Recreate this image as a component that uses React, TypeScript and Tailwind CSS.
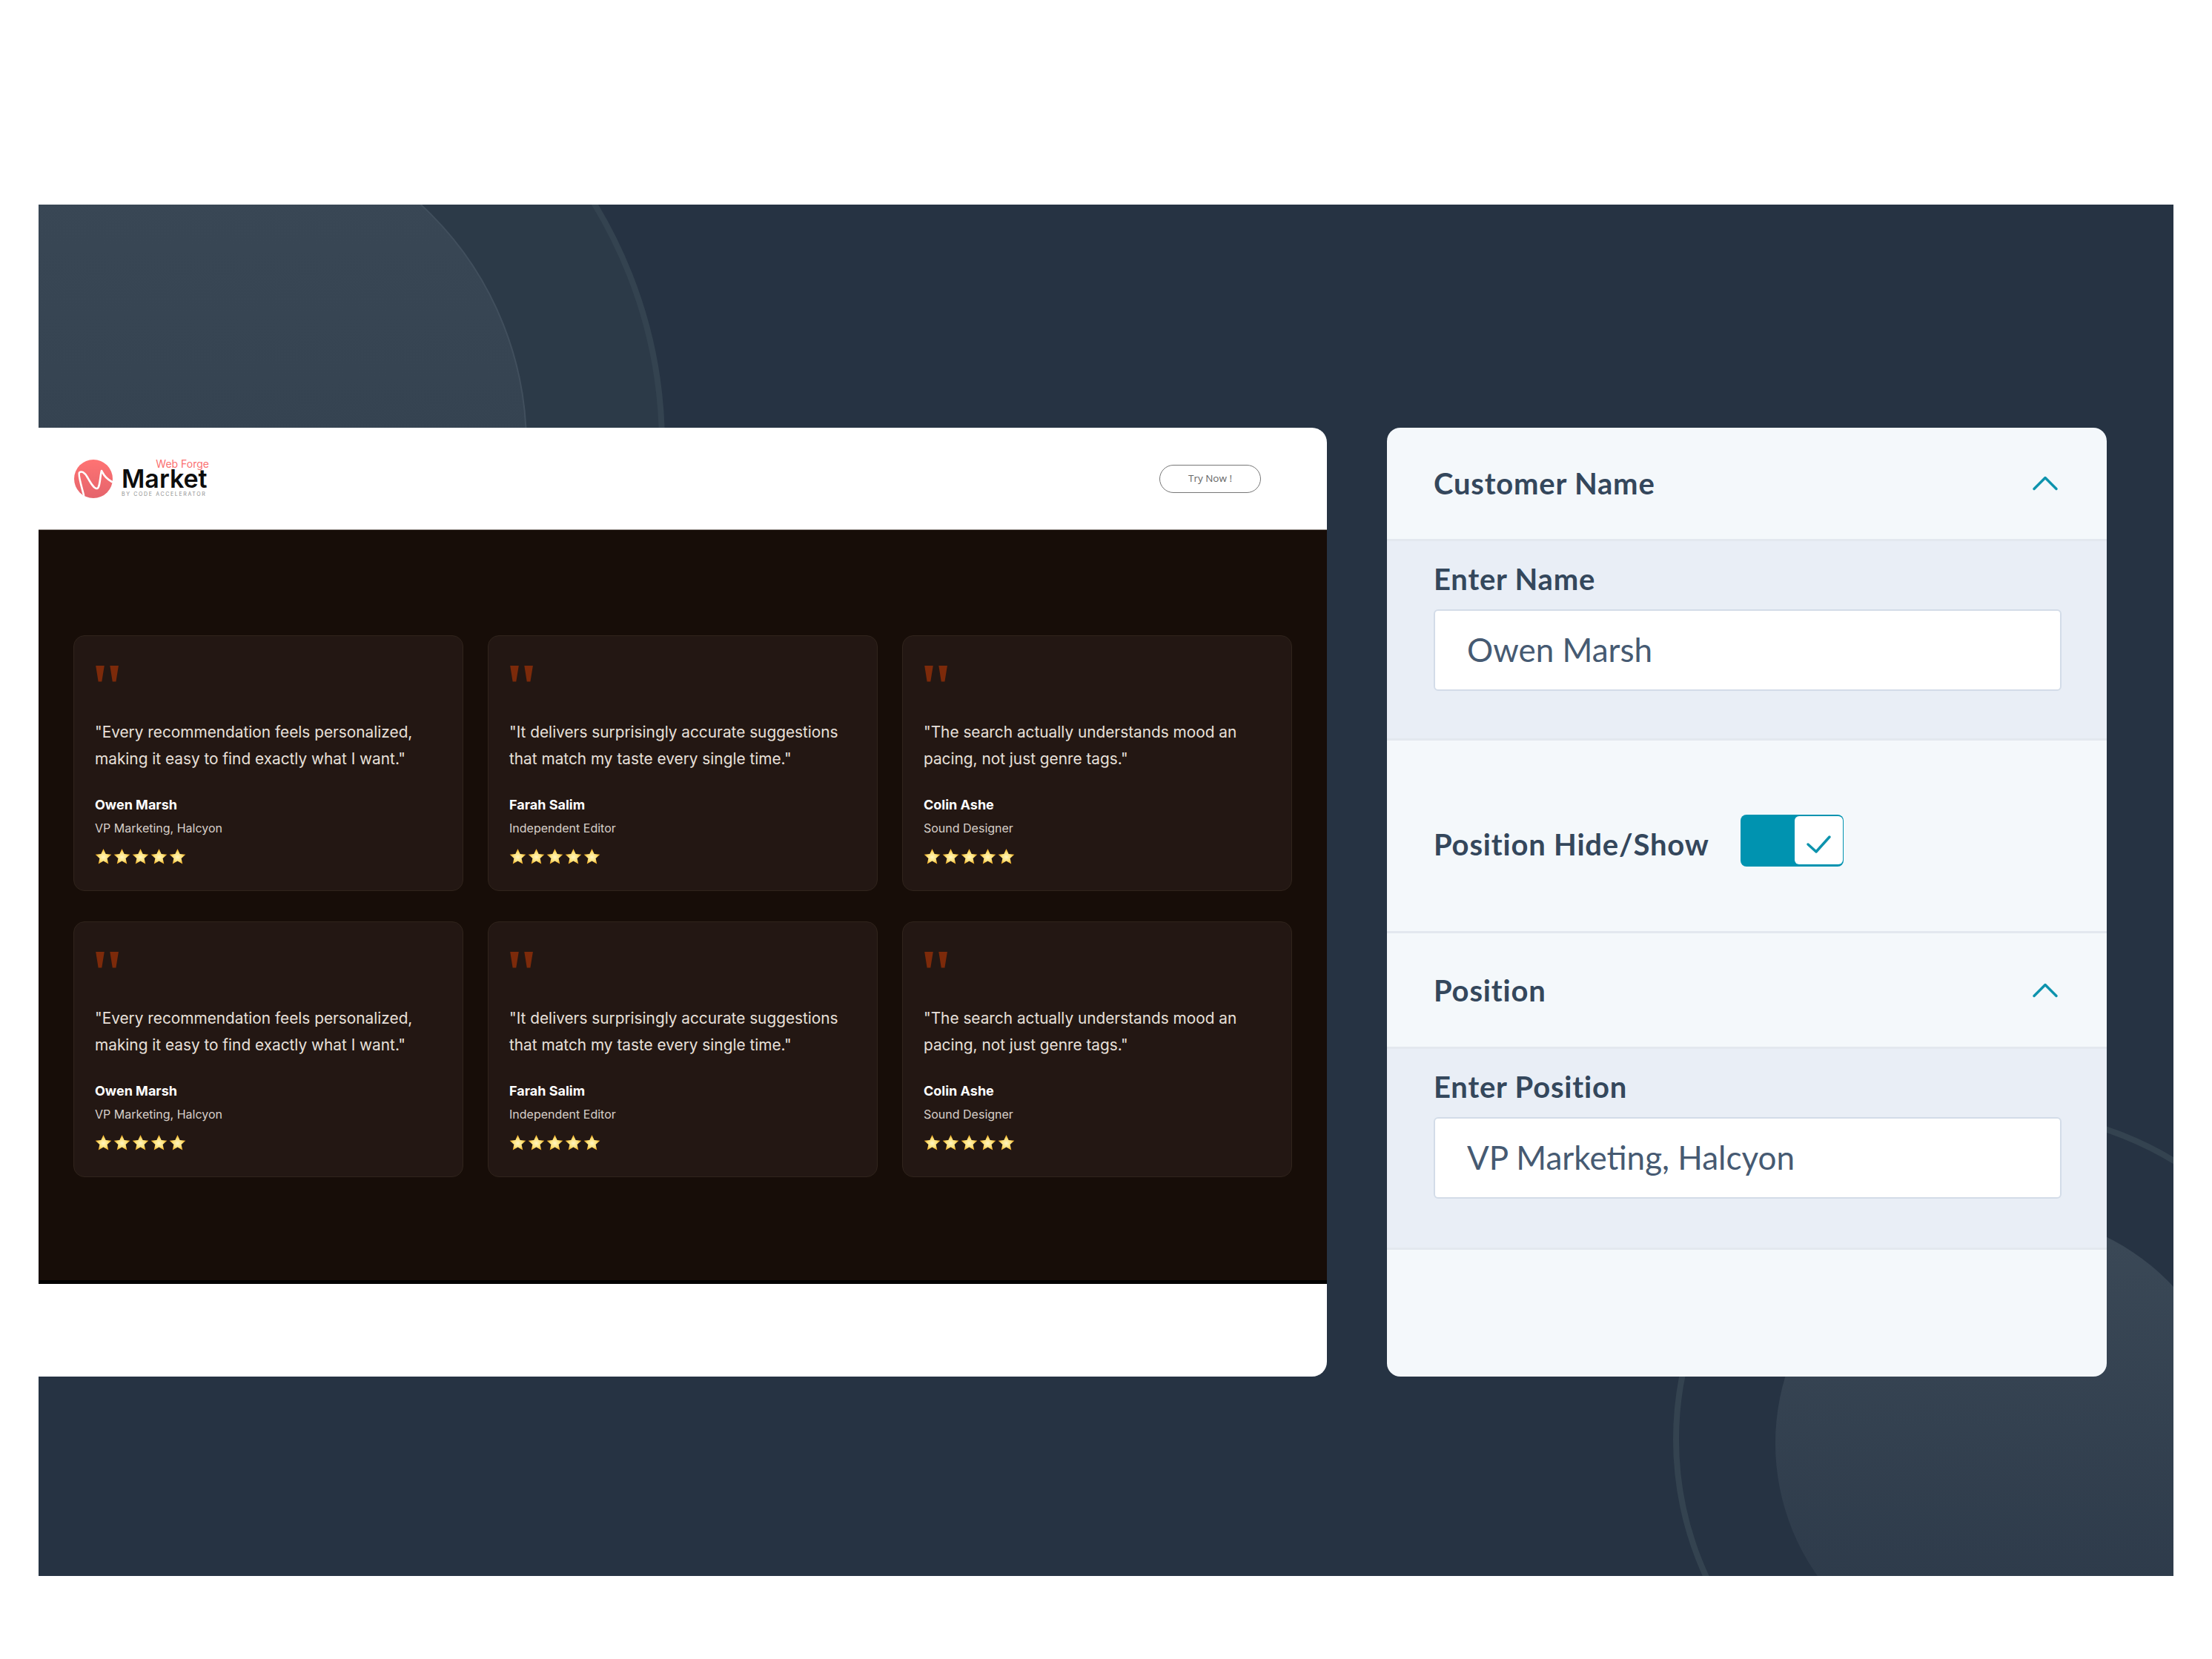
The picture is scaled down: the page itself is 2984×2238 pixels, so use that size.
import { useId } from 'react';
import { ChevronUp } from 'lucide-react';

const testimonials = [
  {
    quote: ['"Every recommendation feels personalized,', 'making it easy to find exactly what I want."'],
    name: 'Owen Marsh',
    role: 'VP Marketing, Halcyon',
  },
  {
    quote: ['"It delivers surprisingly accurate suggestions', 'that match my taste every single time."'],
    name: 'Farah Salim',
    role: 'Independent Editor',
  },
  {
    quote: ['"The search actually understands mood an', 'pacing, not just genre tags."'],
    name: 'Colin Ashe',
    role: 'Sound Designer',
  },
];

function Star() {
  const id = useId();
  return (
    <svg viewBox="0 0 24 24" className="w-[23px] h-[23px]">
      <defs>
        <radialGradient id={id} cx="50%" cy="55%" r="55%">
          <stop offset="0%" stopColor="#fff6c4" />
          <stop offset="50%" stopColor="#ffe27a" />
          <stop offset="100%" stopColor="#f2a20c" />
        </radialGradient>
      </defs>
      <path d="M12 1l3.3 7.4 8 .8-6 5.3 1.8 7.9L12 18.3l-7.1 4.1 1.8-7.900-6-5.300 8-.8z" fill={`url(#${id})`} />
    </svg>
  );
}

function TestimonialCard({ quote, name, role }: { quote: string[]; name: string; role: string }) {
  return (
    <div className="h-[345px] rounded-[15px] border border-[#30241c] bg-[#231713] pl-[28px] pt-[39px] font-['Inter',sans-serif]">
      <div className="h-[73px] font-['Liberation_Serif',serif] text-[92px] font-bold leading-[60px] text-[#7c2a0a] -ml-[9px]">"</div>
      <p className="text-[20.800px] leading-[35.500px] text-[#e8e0da] whitespace-nowrap">
        {quote[0]}
        <br />
        {quote[1]}
      </p>
      <div className="mt-[31px] text-[18px] leading-[28px] font-bold text-white">{name}</div>
      <div className="mt-[3px] text-[16px] leading-[28px] text-[#d7cfc9]">{role}</div>
      <div className="mt-[13px] flex gap-[2px]">
        {[0, 1, 2, 3, 4].map((i) => (
          <Star key={i} />
        ))}
      </div>
    </div>
  );
}

function Logo() {
  return (
    <div className="flex items-center">
      <svg viewBox="0 0 52 52" className="w-[52px] h-[52px]">
        <defs>
          <linearGradient id="logo-fill" x1="0" y1="0" x2="0" y2="1">
            <stop offset="0%" stopColor="#ff7373" />
            <stop offset="100%" stopColor="#e5646c" />
          </linearGradient>
        </defs>
        <circle cx="26" cy="26" r="26" fill="url(#logo-fill)" />
        <path
          d="M13 48C10 36 5 20 7 17.500C10 15 14 17 18 24C22 31 27 40 31 39C35 38 35 22 37 15C39 18 40 24 51 30"
          fill="none"
          stroke="#fff"
          strokeWidth="2.600"
          strokeLinecap="round"
          strokeLinejoin="round"
        />
      </svg>
      <div className="ml-[12px] w-[118px] font-['Inter',sans-serif]">
        <div className="pb-[1px] text-right text-[14px] leading-[12px] text-[#fb7070]">Web Forge</div>
        <div className="text-[34px] leading-[26px] font-semibold text-[#0d0d0d]">Market</div>
        <div className="mt-[3px] text-[7px] leading-[9px] tracking-[1.650px] text-[#8d8d8d] whitespace-nowrap">BY CODE ACCELERATOR</div>
      </div>
    </div>
  );
}

function PreviewCard() {
  return (
    <div className="relative z-10 flex h-[1280px] w-[1738px] flex-col overflow-hidden rounded-r-[20px] bg-white">
      <header className="flex h-[138px] items-center justify-between border-b border-[#9a9490] pl-[48px] pr-[89px]">
        <Logo />
        <button className="h-[38px] w-[137px] rounded-full border border-[#777] font-['Open_Sans',sans-serif] text-[13.500px] text-[#666]">
          Try Now !
        </button>
      </header>
      <div className="h-[1017px] border-b-[5px] border-black bg-[#170d08] px-[47px] pt-[142px]">
        <div className="grid grid-cols-3 gap-x-[33px] gap-y-[41px]">
          {[...testimonials, ...testimonials].map((t, i) => (
            <TestimonialCard key={i} {...t} />
          ))}
        </div>
      </div>
    </div>
  );
}

const headingClass = 'text-[40px] font-bold tracking-[0.8px] text-[#34475c]';

function AccordionHeader({ title, height }: { title: string; height: string }) {
  return (
    <div className={`flex items-center justify-between border-b-[3px] border-[#e3e8ef] pl-[63px] pr-[53px] ${height}`}>
      <span className={headingClass}>{title}</span>
      <ChevronUp className="h-[60px] w-[60px] text-[#0d93ad]" strokeWidth={1.400} />
    </div>
  );
}

function TextField({ label, value, height }: { label: string; value: string; height: string }) {
  return (
    <div className={`border-b-[3px] border-[#e3e8ef] bg-[#e9eef6] pl-[63px] pr-[61px] pt-[27px] ${height}`}>
      <div className={`${headingClass} leading-[48px]`}>{label}</div>
      <div className="mt-[17px] flex h-[110px] items-center rounded-[6px] border-[2px] border-[#d3dce8] bg-white pl-[43px] pb-[2px] text-[44px] text-[#465a72]">
        {value}
      </div>
    </div>
  );
}

function SettingsPanel() {
  return (
    <div className="relative z-10 h-[1280px] w-[971px] overflow-hidden rounded-[18px] bg-[#f4f8fb] font-['Lato',sans-serif]">
      <AccordionHeader title="Customer Name" height="h-[153px]" />
      <TextField label="Enter Name" value="Owen Marsh" height="h-[269px]" />
      <div className="flex h-[260px] items-center border-b-[3px] border-[#e3e8ef] pl-[63px] pt-[12px]">
        <span className={`${headingClass} mt-[10px]`}>Position Hide/Show</span>
        <div className="ml-[42px] flex h-[70px] w-[139px] justify-end rounded-[8px] bg-[#0093b0] py-[2px] pr-[1px]">
          <div className="flex h-[65px] w-[65px] items-center justify-center rounded-[6px] bg-white">
            <svg viewBox="0 0 65 65" className="h-[65px] w-[65px]" fill="none" stroke="#0d93ad" strokeWidth="3.500" strokeLinecap="round" strokeLinejoin="round">
              <path d="M18 38l11 10 18-20" />
            </svg>
          </div>
        </div>
      </div>
      <AccordionHeader title="Position" height="h-[156px]" />
      <TextField label="Enter Position" value="VP Marketing, Halcyon" height="h-[271px]" />
    </div>
  );
}

export default function App() {
  return (
    <div className="h-[2238px] w-[2984px] bg-white pl-[52px] pt-[276px]">
      <section className="relative flex h-[1850px] w-[2880px] gap-[81px] overflow-hidden bg-[#263343] pt-[301px]">
        {/* top left circles */}
        <div className="absolute left-[-411px] top-[-304px] h-[1256px] w-[1256px] rounded-full border-[8px] border-[#344350] bg-[#2c3a48]" />
        <div className="absolute left-[-223px] top-[-117px] h-[882px] w-[882px] rounded-full border-[2px] border-[#414f5d] bg-gradient-to-b from-[#3a4856] to-[#303e4c]" />
        {/* bottom right circles */}
        <div className="absolute left-[2205px] top-[1221px] h-[890px] w-[890px] rounded-full border-[8px] border-[#344350]" />
        <div className="absolute left-[2343px] top-[1361px] h-[620px] w-[620px] rounded-full bg-gradient-to-b from-[#3b4957] to-[#2b3848]" />
        <PreviewCard />
        <SettingsPanel />
      </section>
    </div>
  );
}
